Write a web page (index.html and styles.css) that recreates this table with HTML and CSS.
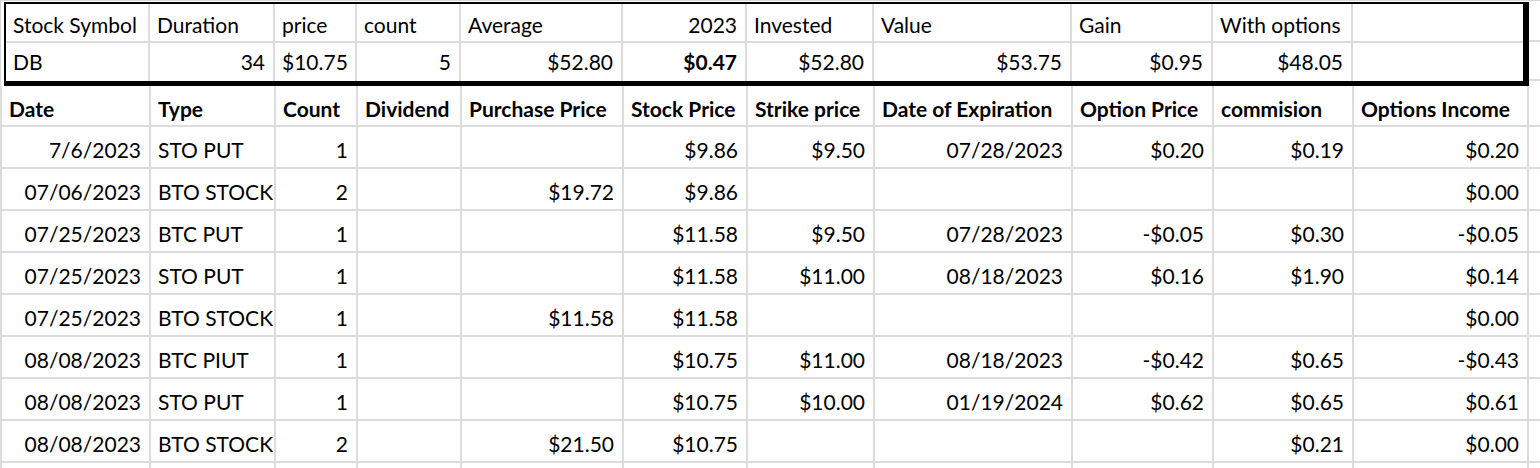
FILE: index.html
```html
<!DOCTYPE html>
<html lang="en">
<head>
<meta charset="utf-8">
<title>DB options sheet</title>
<link rel="stylesheet" href="styles.css">
</head>
<body>
<div class="sheet">
  <div class="summary-wrap">
    <div class="summary">
      <div class="sgrid">
        <div class="c h1">Stock Symbol</div>
        <div class="c h1">Duration</div>
        <div class="c h1">price</div>
        <div class="c h1">count</div>
        <div class="c h1">Average</div>
        <div class="c h1 r">2023</div>
        <div class="c h1">Invested</div>
        <div class="c h1">Value</div>
        <div class="c h1">Gain</div>
        <div class="c h1">With options</div>
        <div class="c h1 last"></div>

        <div class="c h2">DB</div>
        <div class="c h2 r">34</div>
        <div class="c h2 r">$10.75</div>
        <div class="c h2 r">5</div>
        <div class="c h2 r">$52.80</div>
        <div class="c h2 r b">$0.47</div>
        <div class="c h2 r">$52.80</div>
        <div class="c h2 r">$53.75</div>
        <div class="c h2 r">$0.95</div>
        <div class="c h2 r">$48.05</div>
        <div class="c h2 last"></div>
      </div>
    </div>
    <div class="tail">
      <div class="tcell t1"></div>
      <div class="tcell t2"></div>
    </div>
  </div>

  <div class="dgrid">
    <div class="c hd b">Date</div>
    <div class="c hd b">Type</div>
    <div class="c hd b">Count</div>
    <div class="c hd b">Dividend</div>
    <div class="c hd b">Purchase Price</div>
    <div class="c hd b">Stock Price</div>
    <div class="c hd b">Strike price</div>
    <div class="c hd b">Date of Expiration</div>
    <div class="c hd b">Option Price</div>
    <div class="c hd b">commision</div>
    <div class="c hd b">Options Income</div>
    <div class="c hd"></div>

    <div class="c d r">7/6/2023</div><div class="c d">STO PUT</div><div class="c d r">1</div><div class="c d"></div><div class="c d"></div><div class="c d r">$9.86</div><div class="c d r">$9.50</div><div class="c d r">07/28/2023</div><div class="c d r">$0.20</div><div class="c d r">$0.19</div><div class="c d r">$0.20</div><div class="c d"></div>

    <div class="c d r">07/06/2023</div><div class="c d">BTO STOCK</div><div class="c d r">2</div><div class="c d"></div><div class="c d r">$19.72</div><div class="c d r">$9.86</div><div class="c d"></div><div class="c d"></div><div class="c d"></div><div class="c d"></div><div class="c d r">$0.00</div><div class="c d"></div>

    <div class="c d r">07/25/2023</div><div class="c d">BTC PUT</div><div class="c d r">1</div><div class="c d"></div><div class="c d"></div><div class="c d r">$11.58</div><div class="c d r">$9.50</div><div class="c d r">07/28/2023</div><div class="c d r">-$0.05</div><div class="c d r">$0.30</div><div class="c d r">-$0.05</div><div class="c d"></div>

    <div class="c d r">07/25/2023</div><div class="c d">STO PUT</div><div class="c d r">1</div><div class="c d"></div><div class="c d"></div><div class="c d r">$11.58</div><div class="c d r">$11.00</div><div class="c d r">08/18/2023</div><div class="c d r">$0.16</div><div class="c d r">$1.90</div><div class="c d r">$0.14</div><div class="c d"></div>

    <div class="c d r">07/25/2023</div><div class="c d">BTO STOCK</div><div class="c d r">1</div><div class="c d"></div><div class="c d r">$11.58</div><div class="c d r">$11.58</div><div class="c d"></div><div class="c d"></div><div class="c d"></div><div class="c d"></div><div class="c d r">$0.00</div><div class="c d"></div>

    <div class="c d r">08/08/2023</div><div class="c d">BTC PIUT</div><div class="c d r">1</div><div class="c d"></div><div class="c d"></div><div class="c d r">$10.75</div><div class="c d r">$11.00</div><div class="c d r">08/18/2023</div><div class="c d r">-$0.42</div><div class="c d r">$0.65</div><div class="c d r">-$0.43</div><div class="c d"></div>

    <div class="c d r">08/08/2023</div><div class="c d">STO PUT</div><div class="c d r">1</div><div class="c d"></div><div class="c d"></div><div class="c d r">$10.75</div><div class="c d r">$10.00</div><div class="c d r">01/19/2024</div><div class="c d r">$0.62</div><div class="c d r">$0.65</div><div class="c d r">$0.61</div><div class="c d"></div>

    <div class="c d r">08/08/2023</div><div class="c d">BTO STOCK</div><div class="c d r">2</div><div class="c d"></div><div class="c d r">$21.50</div><div class="c d r">$10.75</div><div class="c d"></div><div class="c d"></div><div class="c d"></div><div class="c d r">$0.21</div><div class="c d r">$0.00</div><div class="c d"></div>

    <div class="c e"></div><div class="c e"></div><div class="c e"></div><div class="c e"></div><div class="c e"></div><div class="c e"></div><div class="c e"></div><div class="c e"></div><div class="c e"></div><div class="c e"></div><div class="c e"></div><div class="c e"></div>
  </div>
</div>
</body>
</html>
```
FILE: styles.css
```css
* {
  box-sizing: border-box;
}

html, body {
  margin: 0;
  padding: 0;
  background: #ffffff;
}

body {
  font-family: Lato, "Open Sans", "Liberation Sans", sans-serif;
  font-size: 21px;
  line-height: 25px;
  color: #000000;
  width: 1540px;
  height: 468px;
  overflow: hidden;
}

.sheet {
  width: 1540px;
}

/* ---------- summary block ---------- */
.summary-wrap {
  display: flex;
  border-top: 1px solid #d6d6d6;
  border-left: 1px solid #d6d6d6;
  padding-top: 1px;
  padding-left: 3px;
}

.summary {
  border: 2px solid #000000;
  border-right-width: 6px;
  border-bottom-width: 5px;
  flex: none;
}

.sgrid {
  display: grid;
  grid-template-columns: 144px 125px 82px 104px 162px 124px 127px 198px 141px 140px 170px;
}

.tail {
  flex: 1;
  display: flex;
  flex-direction: column;
}

.tcell {
  border-bottom: 2px solid #dcdcdc;
}

.t1 {
  height: 40px;
}

.t2 {
  height: 39px;
}

/* ---------- cells ---------- */
.c {
  border-right: 2px solid #dcdcdc;
  border-bottom: 2px solid #dcdcdc;
  padding-left: 7px;
  padding-right: 8px;
  white-space: nowrap;
}

.r {
  text-align: right;
}

.b {
  font-weight: 700;
}

.h1 {
  height: 39px;
  padding-top: 8px;
}

.h2 {
  height: 38px;
  padding-top: 6px;
  border-bottom: none;
}

.last {
  border-right: none;
}

/* ---------- data table ---------- */
.dgrid {
  display: grid;
  grid-template-columns: 149px 125px 82px 104px 162px 124px 127px 198px 141px 140px 175px 1fr;
  border-left: 2px solid #dcdcdc;
}

.hd {
  height: 41px;
  padding-top: 10px;
}

.d {
  height: 42px;
  padding-top: 10px;
}

.e {
  height: 6px;
  border-bottom: none;
}
```
